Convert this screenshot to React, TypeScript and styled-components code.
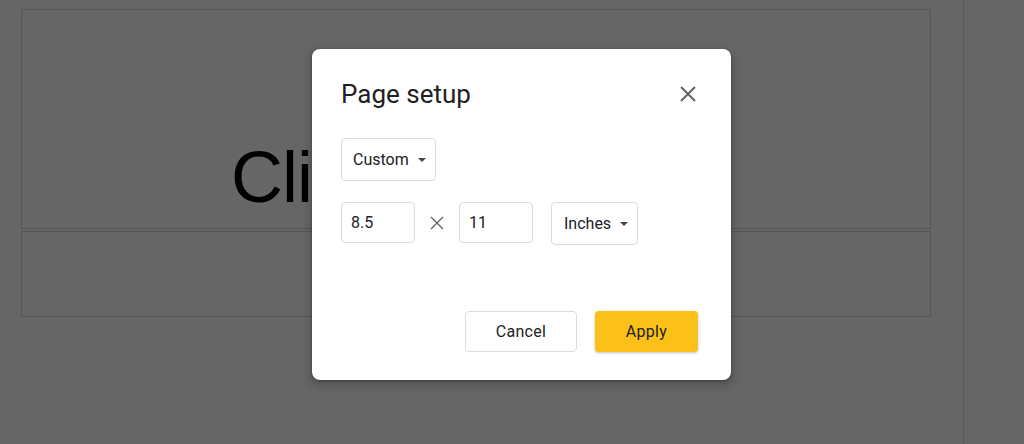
import React from 'react';
import styled, { createGlobalStyle } from 'styled-components';

const GlobalStyle = createGlobalStyle`
    html, body {
        margin: 0;
        padding: 0;
        background: #ffffff;
        overflow: hidden;
    }
    body {
        font-family: Roboto, "Liberation Sans", Arial, sans-serif;
    }
`;

const Page = styled.div`
    position: relative;
    width: 1024px;
    height: 444px;
    display: flex;
    background: #ffffff;
    overflow: hidden;
`;

const Canvas = styled.div`
    width: 963px;
    box-sizing: border-box;
    padding: 9px 0 0 21px;
    display: flex;
    flex-direction: column;
    gap: 2px;
`;

const SidePanel = styled.div`
    flex: 1;
    border-left: 1px solid #dcdcdc;
`;

const Placeholder = styled.div<{ $height: number }>`
    width: 910px;
    height: ${(p) => p.$height}px;
    box-sizing: border-box;
    border: 1px solid #d4d4d4;
    display: flex;
    align-items: flex-end;
    justify-content: center;
    padding-bottom: 15px;
`;

const TitleText = styled.div`
    font-family: "Liberation Sans", Arial, sans-serif;
    font-size: 72px;
    line-height: 72px;
    letter-spacing: -1px;
    color: #000000;
    white-space: nowrap;
`;

const Scrim = styled.div`
    position: absolute;
    inset: 0;
    background: rgba(0, 0, 0, 0.6);
`;

const Dialog = styled.div`
    position: absolute;
    left: 312px;
    top: 49px;
    width: 419px;
    box-sizing: border-box;
    padding: 29px 33px 28px 29px;
    background: #ffffff;
    border-radius: 8px;
    box-shadow: 0 4px 8px 3px rgba(0, 0, 0, 0.15), 0 1px 3px rgba(0, 0, 0, 0.3);
    display: flex;
    flex-direction: column;
    color: #202124;
`;

const Header = styled.div`
    height: 32px;
    display: flex;
    align-items: center;
    justify-content: space-between;
`;

const Title = styled.h2`
    margin: 0;
    font-size: 26px;
    font-weight: 400;
    line-height: 32px;
    color: #202124;
`;

const CloseButton = styled.button`
    border: 0;
    padding: 0;
    margin-right: 2px;
    background: transparent;
    width: 16px;
    height: 16px;
    display: flex;
    cursor: pointer;
    color: #5f6368;
`;

const Select = styled.div`
    display: inline-flex;
    align-items: center;
    gap: 9px;
    height: 43px;
    box-sizing: border-box;
    padding: 0 9px 0 11px;
    border: 1px solid #dadce0;
    border-radius: 4px;
    font-size: 16px;
    color: #202124;
    align-self: flex-start;
`;

const Caret = styled.span`
    width: 0;
    height: 0;
    border-left: 4px solid transparent;
    border-right: 4px solid transparent;
    border-top: 4px solid #444746;
`;

const SizeRow = styled.div`
    display: flex;
    align-items: flex-start;
    margin-top: 21px;
    height: 43px;
`;

const NumberInput = styled.input`
    width: 74px;
    height: 41px;
    box-sizing: border-box;
    padding: 0 0 0 9px;
    border: 1px solid #dadce0;
    border-radius: 4px;
    font-family: Roboto, "Liberation Sans", Arial, sans-serif;
    font-size: 16px;
    color: #202124;
    outline: none;
`;

const Times = styled.span`
    width: 44px;
    height: 41px;
    display: flex;
    align-items: center;
    justify-content: center;
    color: #5f6368;
`;

const UnitSelect = styled(Select)`
    margin-left: 18px;
    padding-left: 12px;
`;

const Footer = styled.div`
    display: flex;
    justify-content: flex-end;
    gap: 18px;
    margin-top: 66px;
`;

const Button = styled.button<{ $primary?: boolean }>`
    height: 41px;
    box-sizing: border-box;
    border-radius: 4px;
    font-family: Roboto, "Liberation Sans", Arial, sans-serif;
    font-size: 16px;
    font-weight: 400;
    letter-spacing: 0.3px;
    color: #202124;
    cursor: pointer;
    width: ${(p) => (p.$primary ? '103px' : '112px')};
    border: ${(p) => (p.$primary ? '0' : '1px solid #dadce0')};
    background: ${(p) => (p.$primary ? '#fbc118' : '#ffffff')};
    box-shadow: ${(p) =>
        p.$primary ? '0 1px 2px rgba(60, 64, 67, 0.2), 0 1px 3px 1px rgba(60, 64, 67, 0.1)' : 'none'};
`;

const App: React.FC = () => {
    return (
        <Page>
            <GlobalStyle />
            <Canvas>
                <Placeholder $height={220}>
                    <TitleText>Click to add title</TitleText>
                </Placeholder>
                <Placeholder $height={86} />
            </Canvas>
            <SidePanel />
            <Scrim />
            <Dialog role="dialog" aria-label="Page setup">
                <Header>
                    <Title>Page setup</Title>
                    <CloseButton aria-label="Close">
                        <svg width="16" height="16" viewBox="0 0 16 16">
                            <path
                                d="M1 1L15 15M15 1L1 15"
                                stroke="currentColor"
                                strokeWidth="2"
                                fill="none"
                            />
                        </svg>
                    </CloseButton>
                </Header>
                <Select style={{ marginTop: 28 }}>
                    Custom
                    <Caret />
                </Select>
                <SizeRow>
                    <NumberInput defaultValue="8.5" />
                    <Times>
                        <svg width="14" height="14" viewBox="0 0 14 14">
                            <path
                                d="M1 1L13 13M13 1L1 13"
                                stroke="currentColor"
                                strokeWidth="1.3"
                                fill="none"
                            />
                        </svg>
                    </Times>
                    <NumberInput defaultValue="11" />
                    <UnitSelect>
                        Inches
                        <Caret />
                    </UnitSelect>
                </SizeRow>
                <Footer>
                    <Button>Cancel</Button>
                    <Button $primary>Apply</Button>
                </Footer>
            </Dialog>
        </Page>
    );
};

export default App;
